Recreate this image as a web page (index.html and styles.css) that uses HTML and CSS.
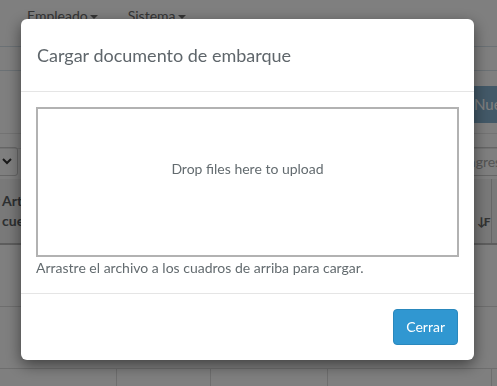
FILE: index.html
```html
<!DOCTYPE html>
<html lang="es">
<head>
<meta charset="utf-8">
<title>Cargar documento de embarque</title>
<link rel="stylesheet" href="styles.css">
</head>
<body>
<div class="page">
  <nav class="navbar">
    <span class="nav-item">Empleado<span class="caret"></span></span>
    <span class="nav-item">Sistema<span class="caret"></span></span>
  </nav>
  <div class="subbar"></div>
  <div class="toolbar">
    <span class="btn-new">Nue</span>
  </div>
  <div class="panel-line"></div>
  <div class="filters">
    <span class="select">
      <svg class="chev" width="10" height="7" viewBox="0 0 10 7"><path d="M1 1l4 4 4-4" fill="none" stroke="#333" stroke-width="2"/></svg>
    </span>
    <span class="search">Ingrese</span>
  </div>
  <table class="grid">
    <thead>
      <tr>
        <th class="c1">Art<br>cue</th>
        <th class="c2"></th>
        <th class="c3"></th>
        <th class="c4"><span class="sort">↓F</span></th>
        <th class="c5"></th>
      </tr>
    </thead>
    <tbody>
      <tr class="row1"><td></td><td></td><td></td><td></td><td></td></tr>
      <tr class="row2"><td></td><td></td><td></td><td></td><td></td></tr>
      <tr class="row3"><td></td><td></td><td></td><td></td><td></td></tr>
    </tbody>
  </table>
</div>

<div class="backdrop"></div>

<div class="modal">
  <div class="modal-header">
    <h4 class="modal-title">Cargar documento de embarque</h4>
  </div>
  <div class="modal-body">
    <div class="dropzone">Drop files here to upload</div>
    <p class="help">Arrastre el archivo a los cuadros de arriba para cargar.</p>
  </div>
  <div class="modal-footer">
    <button class="btn-primary" type="button">Cerrar</button>
  </div>
</div>
</body>
</html>
```

FILE: styles.css
```css
* { box-sizing: border-box; }

html, body {
  margin: 0;
  padding: 0;
  width: 497px;
  height: 386px;
  overflow: hidden;
  background: #fff;
  font-family: Lato, "Open Sans", "Liberation Sans", sans-serif;
  color: #636b6f;
}

.page {
  width: 497px;
  height: 386px;
  overflow: hidden;
}

.navbar {
  height: 47px;
  border-bottom: 1px solid #d6e2ea;
  display: flex;
  gap: 30px;
  padding: 6px 0 0 27px;
  font-size: 14px;
  line-height: 20px;
  color: #6a6a6a;
}

.caret {
  display: inline-block;
  width: 0;
  height: 0;
  margin-left: 2px;
  vertical-align: middle;
  border-top: 4px solid #6a6a6a;
  border-left: 4px solid transparent;
  border-right: 4px solid transparent;
}

.subbar {
  height: 24px;
  border-bottom: 1px solid #d6e2ea;
}

.toolbar {
  display: flex;
  justify-content: flex-end;
  margin-top: 15px;
  height: 37px;
}

.btn-new {
  width: 26px;
  background: #86b2d0;
  color: #fff;
  font-size: 15px;
  line-height: 37px;
  padding-left: 3px;
  white-space: nowrap;
  overflow: hidden;
  border-radius: 3px 0 0 3px;
}

.panel-line {
  margin-top: 10px;
  height: 16px;
  border-top: 1px solid #e6e6e6;
  border-bottom: 1px solid #e6e6e6;
}

.filters {
  display: flex;
  justify-content: space-between;
  height: 30px;
  margin-top: -2px;
}

.select {
  width: 58px;
  margin-left: -40px;
  height: 29px;
  border: 1px solid #ccc;
  border-radius: 3px;
  display: flex;
  align-items: center;
  justify-content: flex-end;
  padding-right: 5px;
}

.search {
  width: 38px;
  height: 29px;
  border: 1px solid #ccc;
  border-right: 0;
  padding-left: 4px;
  font-size: 14px;
  line-height: 27px;
  color: #aaa;
  overflow: hidden;
  white-space: nowrap;
}

.grid {
  border-collapse: collapse;
  width: 520px;
  margin-left: -4px;
  margin-top: 2px;
  table-layout: fixed;
}

.grid th {
  height: 65px;
  background: #f2f2f2;
  border-bottom: 2px solid #bbb;
  text-align: left;
  font-size: 14px;
  line-height: 20px;
  color: #5a5f63;
  padding: 0 6px;
  vertical-align: middle;
}

.grid .c1 { width: 120px; }
.grid .c2 { width: 94px; }
.grid .c3 { width: 117px; }
.grid .c4 { width: 164px; text-align: right; padding-right: 2px; border-right: 1px solid #ccc; }
.grid .c5 { width: 25px; }

.sort {
  font-weight: 900;
  color: #666;
  font-size: 12px;
  letter-spacing: -2px;
  position: relative;
  top: 10px;
}

.grid td {
  border-bottom: 1px solid #ddd;
  border-right: 1px solid #ddd;
}

.row1 td { height: 62px; border-right: 0; }
.row2 td { height: 62px; border-right: 0; }
.row3 td { height: 40px; }

.backdrop {
  position: fixed;
  inset: 0;
  background: rgba(0, 0, 0, 0.5);
}

.modal {
  position: fixed;
  top: 19px;
  left: 21px;
  width: 453px;
  background: #fff;
  border-radius: 6px;
  box-shadow: 0 5px 15px rgba(0, 0, 0, 0.5);
}

.modal-header {
  height: 73px;
  display: flex;
  align-items: center;
  padding: 0 16px;
  border-bottom: 1px solid #e5e5e5;
}

.modal-title {
  margin: 0;
  font-size: 18px;
  font-weight: 400;
  color: #5f666b;
  line-height: 24px;
}

.modal-body {
  padding: 15px 15px 15px;
}

.dropzone {
  height: 150px;
  border: 2px solid #b2b2b2;
  display: flex;
  align-items: center;
  justify-content: center;
  font-size: 14px;
  color: #636b6f;
  padding-bottom: 27px;
}

.help {
  margin: 1px 0 0;
  font-size: 14px;
  line-height: 20px;
  color: #636b6f;
}

.modal-footer {
  border-top: 1px solid #e5e5e5;
  padding: 15px 16px 15px;
  display: flex;
  justify-content: flex-end;
}

.btn-primary {
  height: 36px;
  padding: 0 12px;
  border: 1px solid #2a88bd;
  border-radius: 4px;
  background: #3097d1;
  color: #fff;
  font-family: Lato, "Open Sans", "Liberation Sans", sans-serif;
  font-size: 14px;
  line-height: 34px;
}
```
